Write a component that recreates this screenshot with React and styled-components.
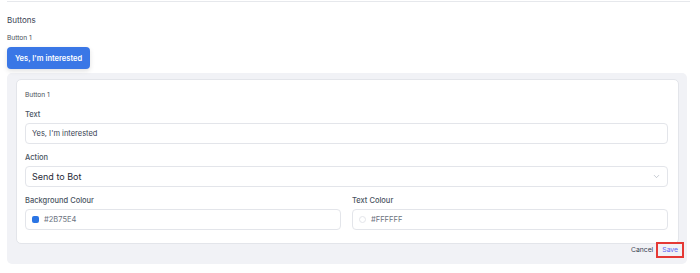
import styled, { createGlobalStyle } from "styled-components";
import { ChevronDown } from "lucide-react";

const Global = createGlobalStyle`
  body {
    margin: 0;
    background: #ffffff;
    font-family: Inter, "Liberation Sans", sans-serif;
  }
  * { box-sizing: border-box; }
`;

const Page = styled.div`
  padding: 0 10px 0 7px;
`;

const Divider = styled.div`
  margin-top: 1px;
  height: 1px;
  background: #e6e8ec;
`;

const Heading = styled.div`
  margin-top: 13px;
  font-size: 8px;
  line-height: 10px;
  color: #374151;
`;

const SmallLabel = styled.div`
  margin-top: ${(p) => p.$top || 0}px;
  font-size: 6.6px;
  line-height: ${(p) => p.$lh || 8}px;
  color: #4a4f58;
`;

const PreviewButton = styled.button`
  margin-top: 5px;
  height: 22px;
  padding: 0 8px;
  border: none;
  border-radius: 4px;
  background: #3a77e6;
  color: #ffffff;
  font-family: inherit;
  font-size: 7.5px;
  font-weight: 600;
  box-shadow: 0 2px 5px rgba(0, 0, 0, 0.12);
`;

const Panel = styled.div`
  margin: 4px 3px 0 0;
  padding: 6px 8px 9px 9px;
  background: #f1f2f6;
  border-radius: 5px;
`;

const Card = styled.div`
  background: #ffffff;
  border: 1px solid #e3e5ea;
  border-radius: 5px;
  padding: 9px 10px 13px 8px;
`;

const Field = styled.div`
  margin-top: 9px;
`;

const Label = styled.div`
  font-size: 7.5px;
  font-weight: 500;
  line-height: 10px;
  color: #4b5563;
  margin-bottom: 3px;
`;

const Input = styled.div`
  height: 21px;
  display: flex;
  align-items: center;
  gap: 5px;
  padding: 0 6px;
  border: 1px solid #e3e5ea;
  border-radius: 4px;
  font-size: ${(p) => p.$size || 7.5}px;
  color: ${(p) => p.$color || "#374151"};
  justify-content: ${(p) => (p.$select ? "space-between" : "flex-start")};
`;

const Columns = styled.div`
  display: grid;
  grid-template-columns: 1fr 1fr;
  column-gap: 11px;
`;

const Swatch = styled.span`
  width: 7px;
  height: 7px;
  border-radius: ${(p) => (p.$round ? "50%" : "2px")};
  background: ${(p) => p.$color};
  border: ${(p) => (p.$round ? "1px solid #e3e5ea" : "none")};
  flex: none;
`;

const Footer = styled.div`
  display: flex;
  justify-content: flex-end;
  align-items: center;
  margin: 1px -2px 0 0;
  font-size: 6.8px;
  line-height: 10px;
`;

const Cancel = styled.span`
  color: #374151;
  margin-right: 6px;
`;

const Save = styled.span`
  color: #6366f1;
  padding: 0 3px;
  outline: 2px solid #e53935;
  outline-offset: 1px;
`;

export default function App() {
  return (
    <Page>
      <Global />
      <Divider />
      <Heading>Buttons</Heading>
      <SmallLabel $top={9}>Button 1</SmallLabel>
      <PreviewButton>Yes, I'm interested</PreviewButton>
      <Panel>
        <Card>
          <SmallLabel $lh={12}>Button 1</SmallLabel>
          <Field>
            <Label>Text</Label>
            <Input>Yes, I'm interested</Input>
          </Field>
          <Field>
            <Label>Action</Label>
            <Input $select $size={9} $color="#1f2937">
              Send to Bot
              <ChevronDown size={9} color="#9ca3af" strokeWidth={1.5} />
            </Input>
          </Field>
          <Columns>
            <Field>
              <Label>Background Colour</Label>
              <Input $color="#6b7280">
                <Swatch $color="#2B75E4" />
                #2B75E4
              </Input>
            </Field>
            <Field>
              <Label>Text Colour</Label>
              <Input $color="#6b7280">
                <Swatch $round $color="#ffffff" />
                #FFFFFF
              </Input>
            </Field>
          </Columns>
        </Card>
        <Footer>
          <Cancel>Cancel</Cancel>
          <Save>Save</Save>
        </Footer>
      </Panel>
    </Page>
  );
}
